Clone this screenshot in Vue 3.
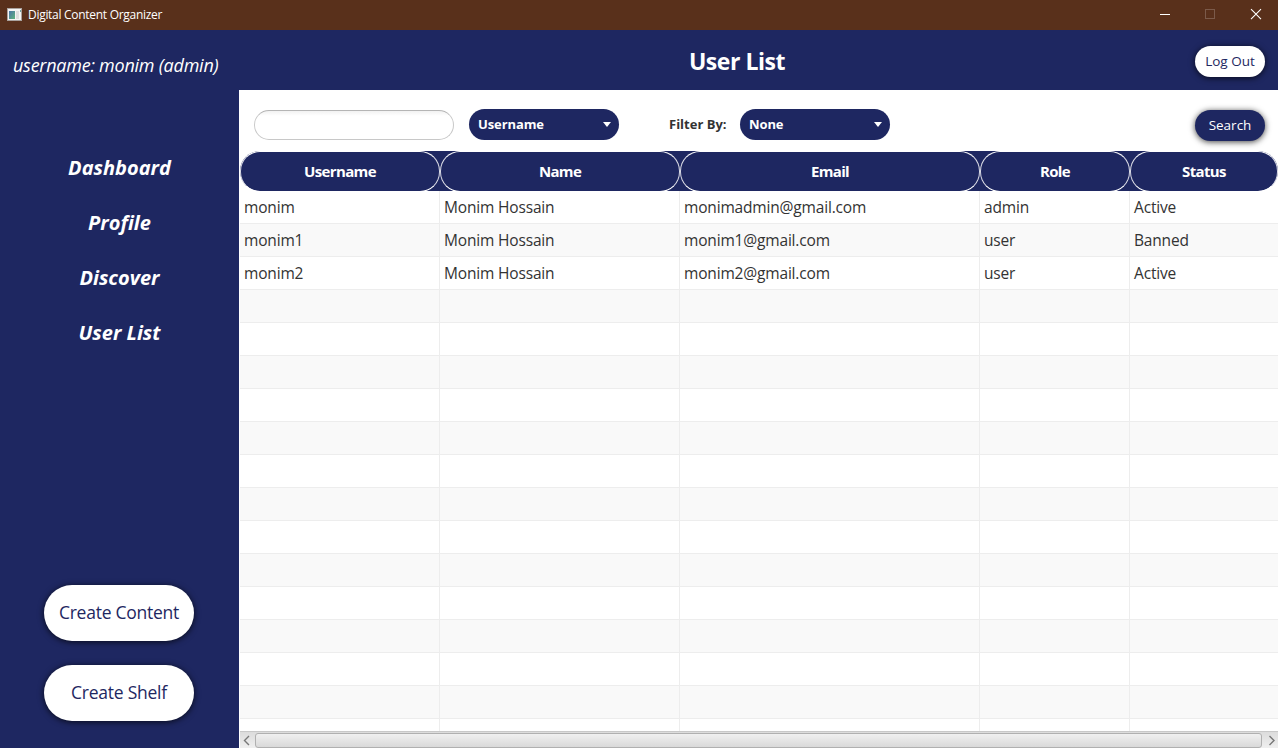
<script setup>
import { ref } from 'vue'

const nav = ['Dashboard', 'Profile', 'Discover', 'User List']
const columns = ['Username', 'Name', 'Email', 'Role', 'Status']
const users = [
  ['monim', 'Monim Hossain', 'monimadmin@gmail.com', 'admin', 'Active'],
  ['monim1', 'Monim Hossain', 'monim1@gmail.com', 'user', 'Banned'],
  ['monim2', 'Monim Hossain', 'monim2@gmail.com', 'user', 'Active'],
]
const rows = [...users, ...Array.from({ length: 14 }, () => ['', '', '', '', ''])]
const query = ref('')
</script>

<template>
  <div class="window">
    <div class="titlebar">
      <svg class="app-icon" width="15" height="13" viewBox="0 0 15 13">
        <defs>
          <linearGradient id="pane" x1="0" y1="0" x2="1" y2="1">
            <stop offset="0" stop-color="#4a74a8" />
            <stop offset="1" stop-color="#5fb37c" />
          </linearGradient>
        </defs>
        <rect width="15" height="13" fill="#a9a29e" />
        <rect x="1" y="1" width="13" height="11" fill="#f4f4f4" />
        <rect x="2" y="3" width="6" height="8" fill="url(#pane)" />
        <rect x="9" y="3" width="3" height="8" fill="#dedede" />
        <rect x="13" y="2" width="1" height="2" fill="#6fa0a0" />
      </svg>
      <span class="app-title">Digital Content Organizer</span>
      <svg class="controls" width="138" height="30" viewBox="0 0 138 30" fill="none">
        <path d="M20 14.500h10" stroke="#fff" />
        <rect x="65.500" y="9.500" width="9" height="9" stroke="#7b5a4a" />
        <path d="M111 9.200l10 10M121 9.200l-10 10" stroke="#fff" stroke-width="1.100" />
      </svg>
    </div>

    <header class="topbar">
      <span class="who">username: monim (admin)</span>
      <h1>User List</h1>
      <button class="btn light">Log Out</button>
    </header>

    <div class="body">
      <aside class="sidebar">
        <nav>
          <a v-for="n in nav" :key="n">{{ n }}</a>
        </nav>
        <div class="create">
          <button class="big">Create Content</button>
          <button class="big">Create Shelf</button>
        </div>
      </aside>

      <main>
        <div class="toolbar">
          <input v-model="query" class="field" type="text" />
          <div class="combo first"><span>Username</span><i></i></div>
          <span class="filter">Filter By:</span>
          <div class="combo"><span>None</span><i></i></div>
          <button class="btn dark">Search</button>
        </div>

        <div class="table">
          <div class="thead grid">
            <div v-for="c in columns" :key="c" class="th">{{ c }}</div>
          </div>
          <div class="tbody">
            <div v-for="(r, i) in rows" :key="i" class="tr grid">
              <div v-for="(c, j) in r" :key="j" class="td">{{ c }}</div>
            </div>
          </div>
          <div class="hscroll">
            <svg width="15" height="17" viewBox="0 0 15 17" fill="none"><path d="M9 5L4.500 9.500L9 14" stroke="#777" stroke-width="1.400" /></svg>
            <div class="thumb"></div>
            <svg width="16" height="17" viewBox="0 0 16 17" fill="none"><path d="M7.500 5l4.500 4.500L7.500 14" stroke="#777" stroke-width="1.400" /></svg>
          </div>
        </div>
      </main>
    </div>
  </div>
</template>

<style>
html, body { margin: 0; overflow: hidden; }
</style>

<style scoped>
.window {
  width: 1278px;
  height: 748px;
  display: flex;
  flex-direction: column;
  background: #fff;
  overflow: hidden;
  font-family: "Open Sans", "Noto Sans", sans-serif;
  white-space: nowrap;
}
button { font-family: inherit; border: 0; padding: 0; margin: 0; }
.titlebar {
  height: 30px;
  flex: none;
  background: #59301b;
  display: flex;
  align-items: center;
}
.app-icon { margin: 0 6px 2px 7px; }
.app-title { color: #fff; font-size: 12px; line-height: 30px; letter-spacing: -0.290px; }
.controls { margin-left: auto; }
.topbar {
  height: 60px;
  flex: none;
  background: #1e2761;
  display: grid;
  grid-template-columns: 239px 1fr auto;
  align-items: center;
  padding-right: 13px;
}
.who { color: #fff; font-style: italic; font-size: 18px; letter-spacing: -0.250px; padding: 9px 0 0 13px; line-height: 24px; }
h1 { margin: 0; padding: 2px 0 0 40px; text-align: center; color: #fff; font-size: 23px; line-height: 30px; font-weight: 700; letter-spacing: -0.450px; }
.btn { width: 70px; height: 31px; border-radius: 16px; font-size: 13.500px; line-height: 31px; text-align: center; }
.light { background: #fff; color: #1e2761; margin-top: 3px; box-shadow: 0 1px 6px rgba(0, 0, 0, .75); }
.dark { background: #1e2761; color: #fff; margin: 2px 0 0 auto; box-shadow: 0 1px 6px rgba(0, 0, 0, .75); }
.body { flex: 1; display: flex; min-height: 0; }
.sidebar {
  width: 239px;
  box-sizing: border-box;
  padding-right: 1px;
  flex: none;
  background: #1e2761;
  display: flex;
  flex-direction: column;
  justify-content: space-between;
  align-items: center;
}
nav { display: flex; flex-direction: column; align-items: center; padding: 50px 0 0 1px; }
nav a { height: 55px; line-height: 55px; color: #fff; font-weight: 700; font-style: italic; font-size: 20px; }
.create { display: flex; flex-direction: column; gap: 24px; padding-bottom: 27px; }
.big { width: 150px; height: 56px; padding-bottom: 2px; border-radius: 28px; background: #fff; color: #1e2761; font-size: 17.500px; letter-spacing: -0.250px; box-shadow: 0 1px 6px rgba(0, 0, 0, .75); }
main { flex: 1; min-width: 0; display: flex; flex-direction: column; }
.toolbar { height: 61px; flex: none; display: flex; align-items: center; padding: 8px 13px 0 15px; box-sizing: border-box; }
.field {
  box-sizing: border-box;
  width: 200px;
  height: 30px;
  border: 1px solid #c8c8c8;
  border-top-color: #b5b5b5;
  border-radius: 15px;
  background: linear-gradient(#f2f2f2, #fff 5px);
  padding: 0 12px;
  outline: 0;
}
.combo {
  width: 150px;
  height: 31px;
  box-sizing: border-box;
  border-radius: 16px;
  background: #1e2761;
  color: #fff;
  font-weight: 700;
  font-size: 13px;
  letter-spacing: -0.100px;
  display: flex;
  align-items: center;
  justify-content: space-between;
  padding: 0 8px 0 9px;
}
.combo span { padding-bottom: 2px; }
.combo i { border: 4px solid transparent; border-top: 5px solid #fff; border-bottom: 0; }
.first { margin-left: 15px; }
.filter { width: 71px; margin-left: 50px; padding-bottom: 2px; font-weight: 700; font-size: 13px; color: #333; }
.table { flex: 1; display: flex; flex-direction: column; min-height: 0; padding-left: 1px; }
.grid { display: grid; grid-template-columns: 200px 240px 300px 150px 148px; }
.thead { height: 40px; flex: none; background: #1e2761; border-radius: 20px; }
.th {
  box-sizing: border-box;
  border: 1px solid #d9dae4;
  border-top-color: #fff;
  border-bottom-color: #fff;
  border-radius: 20px;
  text-align: center;
  color: #fff;
  font-weight: 700;
  font-size: 15px;
  letter-spacing: -0.650px;
  line-height: 39px;
}
.tbody { flex: 1; overflow: hidden; min-height: 0; }
.tr { height: 33px; grid-template-rows: 33px; }
.tr:nth-child(even) { background: #f9f9f9; }
.td { box-sizing: border-box; border-bottom: 1px solid #ededed; border-right: 1px solid #ededed; padding-left: 4px; font-size: 15.500px; letter-spacing: -0.170px; line-height: 33px; color: #333; }
.td:last-child { border-right: 0; }
.hscroll { height: 17px; flex: none; box-sizing: border-box; border-top: 1px solid #c8c8c8; background: linear-gradient(#dcdcdc, #efefef); display: flex; }
.hscroll svg { flex: none; margin-top: -1px; }
.thumb { flex: 1; box-sizing: border-box; height: 15px; margin-top: 1px; border: 1px solid #b0b0b0; border-radius: 3px; background: linear-gradient(#f0f0f0, #d9d9d9); }
</style>
